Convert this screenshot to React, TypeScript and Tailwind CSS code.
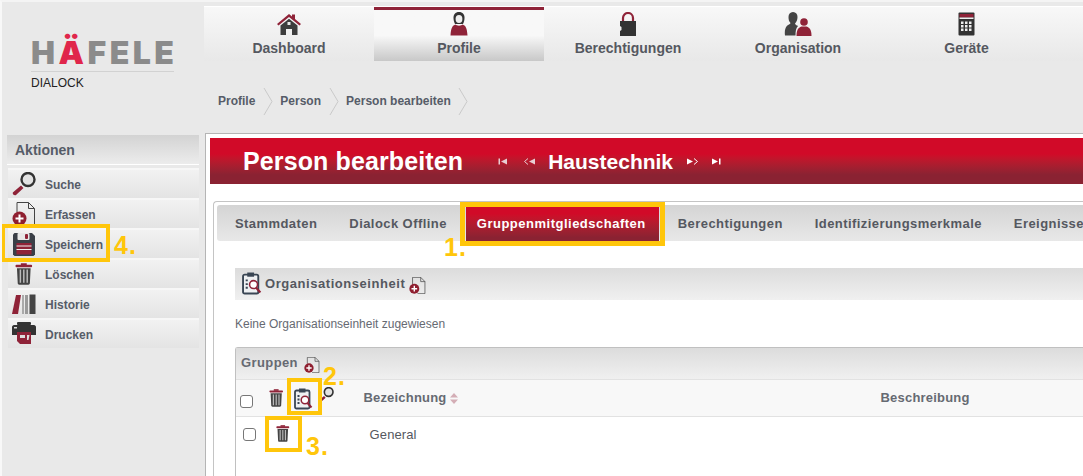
const FONT = "font-['Liberation_Sans',Arial,sans-serif]";

function HouseIcon() {
  return (
    <svg width="28" height="24" viewBox="0 0 26 24">
      <path d="M1 12 13 2l3 2.400V2.500h3v4.500l6 5-1.500 1.500L13 5 2.500 13.500z" fill="#8f2338" />
      <path d="M4.500 13.500 13 6.800l8.500 6.700V23h-5.500v-6h-6v6H4.500z" fill="#3d3d3d" />
      <rect x="11.500" y="10" width="3" height="3" fill="#e9e9e9" />
    </svg>
  );
}

function PersonIcon() {
  return (
    <svg width="20" height="24" viewBox="0 0 20 24">
      <path d="M10 0c3.800 0 5.500 2.500 5.500 5.500 0 2.500-.5 4.500-1.500 6.500H6c-1-2-1.500-4-1.500-6.500C4.500 2.500 6.200 0 10 0z" fill="#333" />
      <ellipse cx="10" cy="7" rx="3.400" ry="4" fill="#eee" />
      <path d="M6.500 12.500c1 1.500 6 1.500 7 0 3 1 4.500 3 5 11h-17c.5-8 2-10 5-11z" fill="#8f2338" />
    </svg>
  );
}

function LockIcon() {
  return (
    <svg width="20" height="24" viewBox="0 0 20 24">
      <path d="M5 9V6a5 5 0 0 1 10 0v3" fill="none" stroke="#8f2338" strokeWidth="2.200" />
      <path d="M2 9h16v15H2v-5l1.500-1v-3L2 14z" fill="#333" />
    </svg>
  );
}

function PeopleIcon() {
  return (
    <svg width="28" height="24" viewBox="0 0 28 24">
      <path d="M9 0c3 0 4.500 2.200 4.500 5 0 3-1 5-2.500 6.500.5 1.500 2 2 3 2.500-2 2-2.500 5-2.500 9.500H1c-.5-5 0-9 4-11 1-.5 1.500-1 1.500-1.500C5 9.500 4.500 7.500 4.500 5 4.500 2.200 6 0 9 0z" fill="#444" />
      <circle cx="20" cy="10" r="3.800" fill="#8f2338" />
      <path d="M17.500 14.500h5c3.500 1 5 4 5 9.500h-15c0-5.500 1.500-8.500 5-9.500z" fill="#8f2338" />
    </svg>
  );
}

function CalcIcon() {
  return (
    <svg width="17" height="24" viewBox="0 0 17 24">
      <rect x="0.500" y="0.500" width="16" height="23" rx="1" fill="#333" />
      <rect x="1.500" y="2" width="14" height="3.500" fill="#8f2338" />
      <rect x="1.500" y="5.500" width="14" height="1.500" fill="#eee" />
      {[9.500, 13, 16.500].map((y) =>
        [3, 7, 11].map((x) => <rect key={`${x}-${y}`} x={x} y={y} width="2.500" height="2.500" fill="#eee" />)
      )}
    </svg>
  );
}

function SearchIcon({ size = 24 }: { size?: number }) {
  return (
    <svg width={size} height={size} viewBox="0 0 24 24">
      <path d="M.8 20.500 9 13.500l2.500 2.500-7.500 7c-1.500 1-3.800-.8-3.200-2.500z" fill="#8f2338" />
      <circle cx="16" cy="7.500" r="6.500" fill="#e2e2e2" stroke="#333" strokeWidth="2.400" />
    </svg>
  );
}

function DocPlusIcon({ size = 24 }: { size?: number }) {
  return (
    <svg width={size} height={size} viewBox="0 0 24 24">
      <path d="M5 10V.5h11.500l6 6V23.500H12" fill="none" stroke="#444" strokeWidth="1" />
      <path d="M16.500 .5v6h6" fill="none" stroke="#444" strokeWidth="1" />
      <circle cx="7.500" cy="16.500" r="7" fill="#8f1f30" />
      <path d="M3.500 16.500h8M7.500 12.500v8" stroke="#fff" strokeWidth="2" />
    </svg>
  );
}

function FloppyIcon() {
  return (
    <svg width="24" height="24" viewBox="0 0 24 24">
      <path d="M1 2.500 2.500 1h17.500L23 4v18.500L21.500 24h-19L1 22.500z" fill="#3a3f47" />
      <rect x="5.500" y="1" width="12" height="7" rx="1" fill="#e8e8e8" />
      <rect x="13" y="2" width="3" height="5" rx="1" fill="#8f2338" />
      <rect x="4.500" y="11" width="15" height="11.500" fill="#8f2338" />
      <path d="M4.500 14h15M4.500 17.500h15" stroke="#eee" strokeWidth="1" />
    </svg>
  );
}

function TrashIcon({ size = 22 }: { size?: number }) {
  return (
    <svg width={size * 0.8} height={size} viewBox="0 0 18 22">
      <rect x="6" y="0" width="6" height="2" fill="#8f2338" />
      <rect x="0.500" y="1.500" width="17" height="2.500" rx="1" fill="#8f2338" />
      <path d="M2 5h14l-.8 15.500c0 .8-.7 1.500-1.500 1.500H4.300c-.8 0-1.500-.7-1.500-1.500z" fill="#444" />
      <path d="M5.500 6.500v13.500M9 6.500v13.500M12.500 6.500v13.500" stroke="#bbb" strokeWidth="1.500" />
    </svg>
  );
}

function BooksIcon() {
  return (
    <svg width="24" height="20" viewBox="0 0 24 20">
      <path d="M4 1h5L6 20H0z" fill="#8f2338" />
      <rect x="10" y="1" width="2" height="19" fill="#aaa" />
      <rect x="13" y="1" width="3" height="19" fill="#9a9a9a" />
      <rect x="17.500" y="0.500" width="6" height="19.500" fill="#444" />
    </svg>
  );
}

function PrinterIcon() {
  return (
    <svg width="24" height="24" viewBox="0 0 24 24">
      <rect x="5" y="0" width="14" height="3" rx="1" fill="#333" />
      <path d="M0 5c0-1 1-2 2-2h20c1 0 2 1 2 2v8H0z" fill="#333" />
      <rect x="2" y="5" width="3" height="1.500" fill="#ddd" />
      <path d="M5 10h14v12H8l-3-3z" fill="#8f2338" />
      <path d="M8 13h5v3H8zM15 13h2.500l-1 5H15z" fill="#ddd" />
    </svg>
  );
}

function ClipboardIcon({ size = 21 }: { size?: number }) {
  return (
    <svg width={size} height={size * 1.1} viewBox="0 0 20 22">
      <rect x="1" y="2.500" width="14.500" height="18" rx="1.500" fill="#eef0f2" stroke="#3a4654" strokeWidth="1.800" />
      <rect x="5" y="0.500" width="6.500" height="4" fill="#3a4654" />
      <path d="M3.500 8h2M3.500 11.500h2M3.500 15h2" stroke="#3a4654" strokeWidth="1.800" />
      <circle cx="11" cy="12" r="3.800" fill="#fff" stroke="#8f2338" strokeWidth="1.500" />
      <path d="m13.500 15 4 4.500" stroke="#8f2338" strokeWidth="2" />
    </svg>
  );
}

function PagerBack() {
  return (
    <svg width="38" height="7" viewBox="0 0 38 7">
      <g fill="#e8cdd2">
        <rect x="0.500" y="0.500" width="1.500" height="6" />
        <path d="M9 .5v6L3 3.500z" />
        <path d="M30 .5 26.500 3.500 30 6.500" fill="none" stroke="#e8cdd2" />
        <path d="M37 .5v6l-6-3z" />
      </g>
    </svg>
  );
}

function PagerNext() {
  return (
    <svg width="35" height="7" viewBox="0 0 35 7">
      <g fill="#fff">
        <path d="M0 .5v6l6-3z" />
        <path d="M7 .5 10.500 3.500 7 6.500" fill="none" stroke="#fff" />
        <path d="M25 .5v6l6-3z" />
        <rect x="32" y="0.500" width="1.500" height="6" />
      </g>
    </svg>
  );
}

function Crumb({ label }: { label: string }) {
  return (
    <div className="flex items-center">
      <span className="text-[12px] font-bold text-[#565c68]">{label}</span>
      <svg width="10" height="27" viewBox="0 0 10 27" className="mx-[7.500px]">
        <path d="M1 0l8 13.500L1 27" fill="none" stroke="#c9c9c9" />
      </svg>
    </div>
  );
}

function Marker({ className }: { className: string }) {
  return <div className={`absolute border-[#ffc60b] ${className}`} />;
}

function Num({ className, children }: { className: string; children: string }) {
  return <span className={`absolute text-[25px] leading-none font-bold tracking-[1px] text-[#ffc60b] ${className}`}>{children}</span>;
}

const NAV = [
  { label: "Dashboard", icon: <HouseIcon />, pad: "" },
  { label: "Profile", icon: <PersonIcon />, active: true, pad: "" },
  { label: "Berechtigungen", icon: <LockIcon />, pad: "pr-[2px]" },
  { label: "Organisation", icon: <PeopleIcon />, pad: "pr-[2px]" },
  { label: "Geräte", icon: <CalcIcon />, pad: "pr-[5px]" },
];

const ACTIONS = [
  { label: "Suche", icon: <SearchIcon /> },
  { label: "Erfassen", icon: <DocPlusIcon /> },
  { label: "Speichern", icon: <FloppyIcon /> },
  { label: "Löschen", icon: <TrashIcon /> },
  { label: "Historie", icon: <BooksIcon /> },
  { label: "Drucken", icon: <PrinterIcon /> },
];

const TABS = ["Stammdaten", "Dialock Offline", "Gruppenmitgliedschaften", "Berechtigungen", "Identifizierungsmerkmale", "Ereignisse"];

export default function App() {
  return (
    <div className={`relative flex h-[476px] w-[1083px] overflow-hidden border-t-[2px] border-l-[2px] border-t-[#f4f4f4] border-l-[#f8f8f8] bg-[#e9e9e9] ${FONT}`}>
      <aside className="w-[202px] shrink-0">
        <div className="flex h-[133px] flex-col pt-[35px] pl-[29px]">
          <div className="w-[143px] border-b border-[#d2d2d2] pb-[2px]">
            <div className="font-['Inter',sans-serif] text-[32px] leading-[32px] font-black tracking-[3.500px] whitespace-nowrap text-[#8b8b8b]">
              H<span className="text-[#e0264b]">Ä</span>FELE
            </div>
          </div>
          <div className="mt-[3px] text-[12px] leading-[16px] text-[#222]">DIALOCK</div>
        </div>
        <div className="ml-[5px] h-[30px] w-[192px] border-b border-white bg-gradient-to-b from-[#d3d3d3] to-[#ececec] pt-[7px] pl-[8px] text-[14px] leading-[17px] font-bold text-[#565c68]">
          Aktionen
        </div>
        <div className="mt-[3px] ml-[6px] w-[191px]">
          {ACTIONS.map((a) => (
            <div key={a.label} className="flex h-[30px] items-center border-t-2 border-t-[#f7f7f7] bg-gradient-to-b from-[#f2f2f2] to-[#e4e4e4] pl-[4px]">
              <div className="flex w-[24px] shrink-0 justify-center">{a.icon}</div>
              <span className="mt-[2px] ml-[9px] text-[12px] font-bold text-[#565c68]">{a.label}</span>
            </div>
          ))}
        </div>
      </aside>

      <main className="flex min-w-0 flex-1 flex-col">
        <nav className="mt-[4px] flex h-[55px] shrink-0 border-t border-white bg-gradient-to-b from-[#f8f8f8] to-[#e8e8e8]">
          {NAV.map((n) => (
            <div
              key={n.label}
              className={`flex w-[170px] shrink-0 flex-col items-center ${
                n.active ? "border-t-[3px] border-t-[#8f2338] bg-gradient-to-b from-[#f8f8f8] from-50% to-[#c8c8c8] pt-[2px]" : "pt-[5px]"
              } ${n.pad}`}
            >
              <div className="flex h-[24px] items-center">{n.icon}</div>
              <span className="mt-[4px] text-[14px] leading-[16px] font-bold text-[#555860]">{n.label}</span>
            </div>
          ))}
        </nav>

        <div className="flex h-[72px] shrink-0 items-center pt-[8px] pl-[14px]">
          <Crumb label="Profile" />
          <Crumb label="Person" />
          <Crumb label="Person bearbeiten" />
        </div>

        <section className="ml-[1px] min-h-0 flex-1 border-t border-l border-[#b5b5b5] bg-white pt-[4px] pl-[4px]">
          <header className="flex h-[46px] items-center bg-gradient-to-b from-[#d10a28] from-35% to-[#8a2232] to-80% pl-[33px] font-bold text-white">
            <span className="text-[25px] leading-none tracking-[0.120px]">Person bearbeiten</span>
            <div className="ml-[35px] flex items-center">
              <PagerBack />
            </div>
            <span className="ml-[12px] text-[21px] leading-none">Haustechnik</span>
            <div className="ml-[14px] flex items-center">
              <PagerNext />
            </div>
          </header>

          <div className="mt-[17px] ml-[3px] h-[300px] rounded-tl-[4px] border-t border-l border-[#c4c4c4] pt-[3px] pl-[3px]">
            <div className="flex h-[36px] items-stretch rounded-l-[3px] bg-gradient-to-b from-[#d4d4d4] to-[#e8e8e8] pl-[9px] text-[13px] font-bold tracking-[0.430px] text-[#555860]">
              {TABS.map((t) => (
                <div
                  key={t}
                  className={`flex shrink-0 items-center ${
                    t === "Gruppenmitgliedschaften"
                      ? "mt-[2px] mr-[10px] -ml-[4px] h-[34px] bg-gradient-to-b from-[#d10a28] from-20% to-[#8a2232] to-90% pr-[13px] pl-[11px] tracking-[0.500px] text-white"
                      : "mr-[14px] h-[36px] px-[9px] pt-[2px]"
                  }`}
                >
                  {t}
                </div>
              ))}
            </div>

            <div className="mt-[27px] ml-[18px] flex h-[32px] items-center bg-gradient-to-b from-[#dcdcdc] to-[#f0f0f0] pl-[7px] text-[13px] font-bold tracking-[0.550px] text-[#555860]">
              <ClipboardIcon />
              <span className="ml-[2px]">Organisationseinheit</span>
              <span className="mt-[3px] ml-[4px]"><DocPlusIcon size={17} /></span>
            </div>
            <p className="mt-[16px] ml-[18px] text-[12px] leading-[16px] text-[#666a72]">Keine Organisationseinheit zugewiesen</p>

            <div className="mt-[15px] ml-[18px] h-[200px] rounded-tl-[3px] border-t border-l border-[#c0c0c0]">
              <div className="flex h-[31px] items-center bg-gradient-to-b from-[#dcdcdc] to-[#f0f0f0] pl-[5px] text-[13px] font-bold tracking-[0.400px] text-[#666a72]">
                <span className="mb-[2px]">Gruppen</span>
                <span className="mt-[3px] ml-[6px]"><DocPlusIcon size={16} /></span>
              </div>
              <div className="flex h-[38px] items-center border-y border-[#e2e2e2] bg-[#f8f8f8]">
                <span className="mt-[6px] ml-[4px] h-[13px] w-[13px] rounded-[3px] border border-[#777] bg-white" />
                <span className="ml-[16px]"><TrashIcon size={18} /></span>
                <span className="mt-[1px] ml-[11px]"><ClipboardIcon size={20} /></span>
                <span className="mb-[7px] ml-[4px]"><SearchIcon size={16} /></span>
                <span className="ml-[29px] text-[13px] font-bold tracking-[0.200px] text-[#666a72]">Bezeichnung</span>
                <svg width="8" height="11" viewBox="0 0 8 11" className="ml-[3px]">
                  <path d="M4 0l4 4.500H0zM4 11 0 6.500h8z" fill="#d4aeb6" />
                </svg>
                <span className="ml-[423px] text-[13px] font-bold tracking-[0.200px] text-[#666a72]">Beschreibung</span>
              </div>
              <div className="flex h-[36px] items-start pt-[9px]">
                <span className="mt-[2px] ml-[7px] h-[13px] w-[13px] rounded-[3px] border border-[#777] bg-white" />
                <span className="mt-[-1px] ml-[20px]"><TrashIcon size={17} /></span>
                <span className="ml-[80px] text-[13px] leading-[18px] tracking-[0.100px] text-[#555860]">General</span>
              </div>
            </div>
          </div>
        </section>
      </main>

      <Marker className="top-[222px] left-[-1px] h-[38px] w-[109px] border-[4px]" />
      <Marker className="top-[200px] left-[458px] h-[44px] w-[205px] border-[5px]" />
      <Marker className="top-[376px] left-[285px] h-[37px] w-[35px] border-[4px]" />
      <Marker className="top-[414px] left-[263px] h-[36px] w-[37px] border-[4px]" />
      <Num className="top-[231px] left-[112px]">4.</Num>
      <Num className="top-[233px] left-[442px]">1.</Num>
      <Num className="top-[362px] left-[321px]">2.</Num>
      <Num className="top-[432px] left-[304px]">3.</Num>
    </div>
  );
}
